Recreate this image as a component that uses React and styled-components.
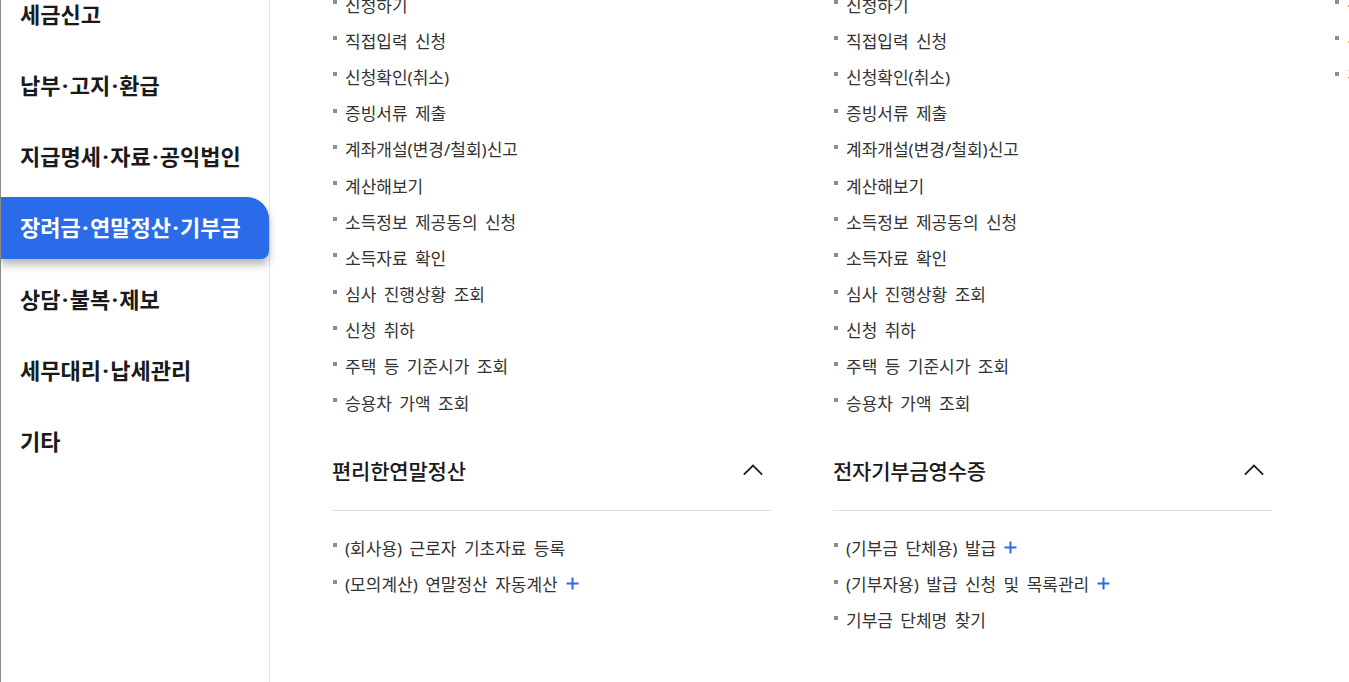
import React from "react";
import styled, { createGlobalStyle } from "styled-components";

const GlobalStyle = createGlobalStyle`
  html, body {
    margin: 0;
    padding: 0;
    background: #fff;
    overflow: hidden;
  }
  body {
    font-family: "Noto Sans", "Noto Sans CJK KR", sans-serif;
    color: #222;
  }
  ul {
    list-style: none;
    margin: 0;
    padding: 0;
  }
`;

const Page = styled.div`
  display: flex;
  width: 100vw;
  height: 682px;
  overflow: hidden;
  border-left: 1px solid #8a8a8a;
  box-sizing: border-box;
`;

const Sidebar = styled.nav`
  width: 268px;
  flex-shrink: 0;
  border-right: 1px solid #e6e3f3;
`;

const Menu = styled.ul`
  display: flex;
  flex-direction: column;
  gap: 9.17px;
  margin-top: -16px !important;
`;

const MenuItem = styled.li`
  height: 62px;
  display: flex;
  align-items: center;
  padding-left: 19px;
  font-size: 22px;
  font-weight: 700;
  white-space: nowrap;
  color: ${({ $active }) => ($active ? "#fff" : "#1a1a1a")};
  background: ${({ $active }) => ($active ? "#2a6be9" : "transparent")};
  border-radius: 0 22px 8px 0;
  box-shadow: ${({ $active }) =>
    $active ? "0 6px 8px rgba(0, 0, 0, 0.28)" : "none"};
  position: relative;
  z-index: ${({ $active }) => ($active ? 1 : 0)};
`;

const MenuText = styled.span`
  position: relative;
  top: -2px;
`;

const Dot = styled.span`
  margin: 0 1.5px;
`;

const Content = styled.div`
  flex: 1;
  min-width: 0;
  overflow: hidden;
  display: grid;
  grid-template-columns: 439px 439px 439px;
  column-gap: 62px;
  padding-left: 62px;
  margin-top: -14px;
  align-items: start;
`;

const Column = styled.div`
  display: flex;
  flex-direction: column;
`;

const List = styled.ul`
  display: flex;
  flex-direction: column;
  padding-top: ${({ $top }) => $top || 0}px !important;
`;

const Item = styled.li`
  height: 36.2px;
  display: flex;
  align-items: center;
  font-size: 17px;
  word-spacing: 3px;
  color: ${({ $accent }) => ($accent ? "#d9781f" : "#333")};
  white-space: nowrap;
  &::before {
    content: "";
    width: 4px;
    height: 4px;
    background: #8e8e8e;
    margin: 0 8px 0 1px;
    position: relative;
    top: -2px;
    flex-shrink: 0;
  }
`;

const SectionHead = styled.div`
  margin-top: 13px;
  height: 78px;
  display: flex;
  align-items: center;
  justify-content: space-between;
  border-bottom: 1px solid #dcdde5;
  box-sizing: border-box;
`;

const SectionTitle = styled.h3`
  margin: 0 0 4px;
  font-size: 21px;
  font-weight: 500;
  letter-spacing: -0.2px;
  color: #1a1a1a;
`;

const Toggle = styled.span`
  display: flex;
  margin: 0 8px 4px 0;
  color: #222;
`;

const PlusMark = styled.span`
  display: inline-flex;
  margin-left: 8px;
  color: #2a6be9;
`;

const Chevron = () => (
  <Toggle>
    <svg width="20" height="20" viewBox="0 0 20 20" fill="none">
      <polyline
        points="1.5,14 10,5.5 18.5,14"
        stroke="currentColor"
        strokeWidth="1.8"
        strokeLinecap="square"
      />
    </svg>
  </Toggle>
);

const Plus = () => (
  <PlusMark>
    <svg width="13" height="13" viewBox="0 0 13 13" fill="none">
      <path d="M6.5 0.5v12M0.5 6.5h12" stroke="currentColor" strokeWidth="2" />
    </svg>
  </PlusMark>
);

const menu = [
  "세금신고",
  "납부·고지·환급",
  "지급명세·자료·공익법인",
  "장려금·연말정산·기부금",
  "상담·불복·제보",
  "세무대리·납세관리",
  "기타",
];

const applyItems = [
  "신청하기",
  "직접입력 신청",
  "신청확인(취소)",
  "증빙서류 제출",
  "계좌개설(변경/철회)신고",
  "계산해보기",
  "소득정보 제공동의 신청",
  "소득자료 확인",
  "심사 진행상황 조회",
  "신청 취하",
  "주택 등 기준시가 조회",
  "승용차 가액 조회",
];

const sections = [
  {
    title: "편리한연말정산",
    items: [
      { label: "(회사용) 근로자 기초자료 등록" },
      { label: "(모의계산) 연말정산 자동계산", plus: true },
    ],
  },
  {
    title: "전자기부금영수증",
    items: [
      { label: "(기부금 단체용) 발급", plus: true },
      { label: "(기부자용) 발급 신청 및 목록관리", plus: true },
      { label: "기부금 단체명 찾기" },
    ],
  },
];

function MenuLabel({ text }) {
  const parts = text.split("·");
  return (
    <MenuText>
      {parts.map((p, i) => (
        <React.Fragment key={i}>
          {i > 0 && <Dot>·</Dot>}
          {p}
        </React.Fragment>
      ))}
    </MenuText>
  );
}

export default function App() {
  return (
    <>
      <GlobalStyle />
      <Page>
        <Sidebar>
          <Menu>
            {menu.map((m, i) => (
              <MenuItem key={m} $active={i === 3}>
                <MenuLabel text={m} />
              </MenuItem>
            ))}
          </Menu>
        </Sidebar>
        <Content>
          {sections.map((s) => (
            <Column key={s.title}>
              <List>
                {applyItems.map((t) => (
                  <Item key={t}>{t}</Item>
                ))}
              </List>
              <SectionHead>
                <SectionTitle>{s.title}</SectionTitle>
                <Chevron />
              </SectionHead>
              <List $top={18}>
                {s.items.map((it) => (
                  <Item key={it.label}>
                    {it.label}
                    {it.plus && <Plus />}
                  </Item>
                ))}
              </List>
            </Column>
          ))}
          <Column>
            <List>
              <Item>신청하기</Item>
              <Item $accent>신청확인</Item>
              <Item $accent>결과조회</Item>
            </List>
          </Column>
        </Content>
      </Page>
    </>
  );
}
